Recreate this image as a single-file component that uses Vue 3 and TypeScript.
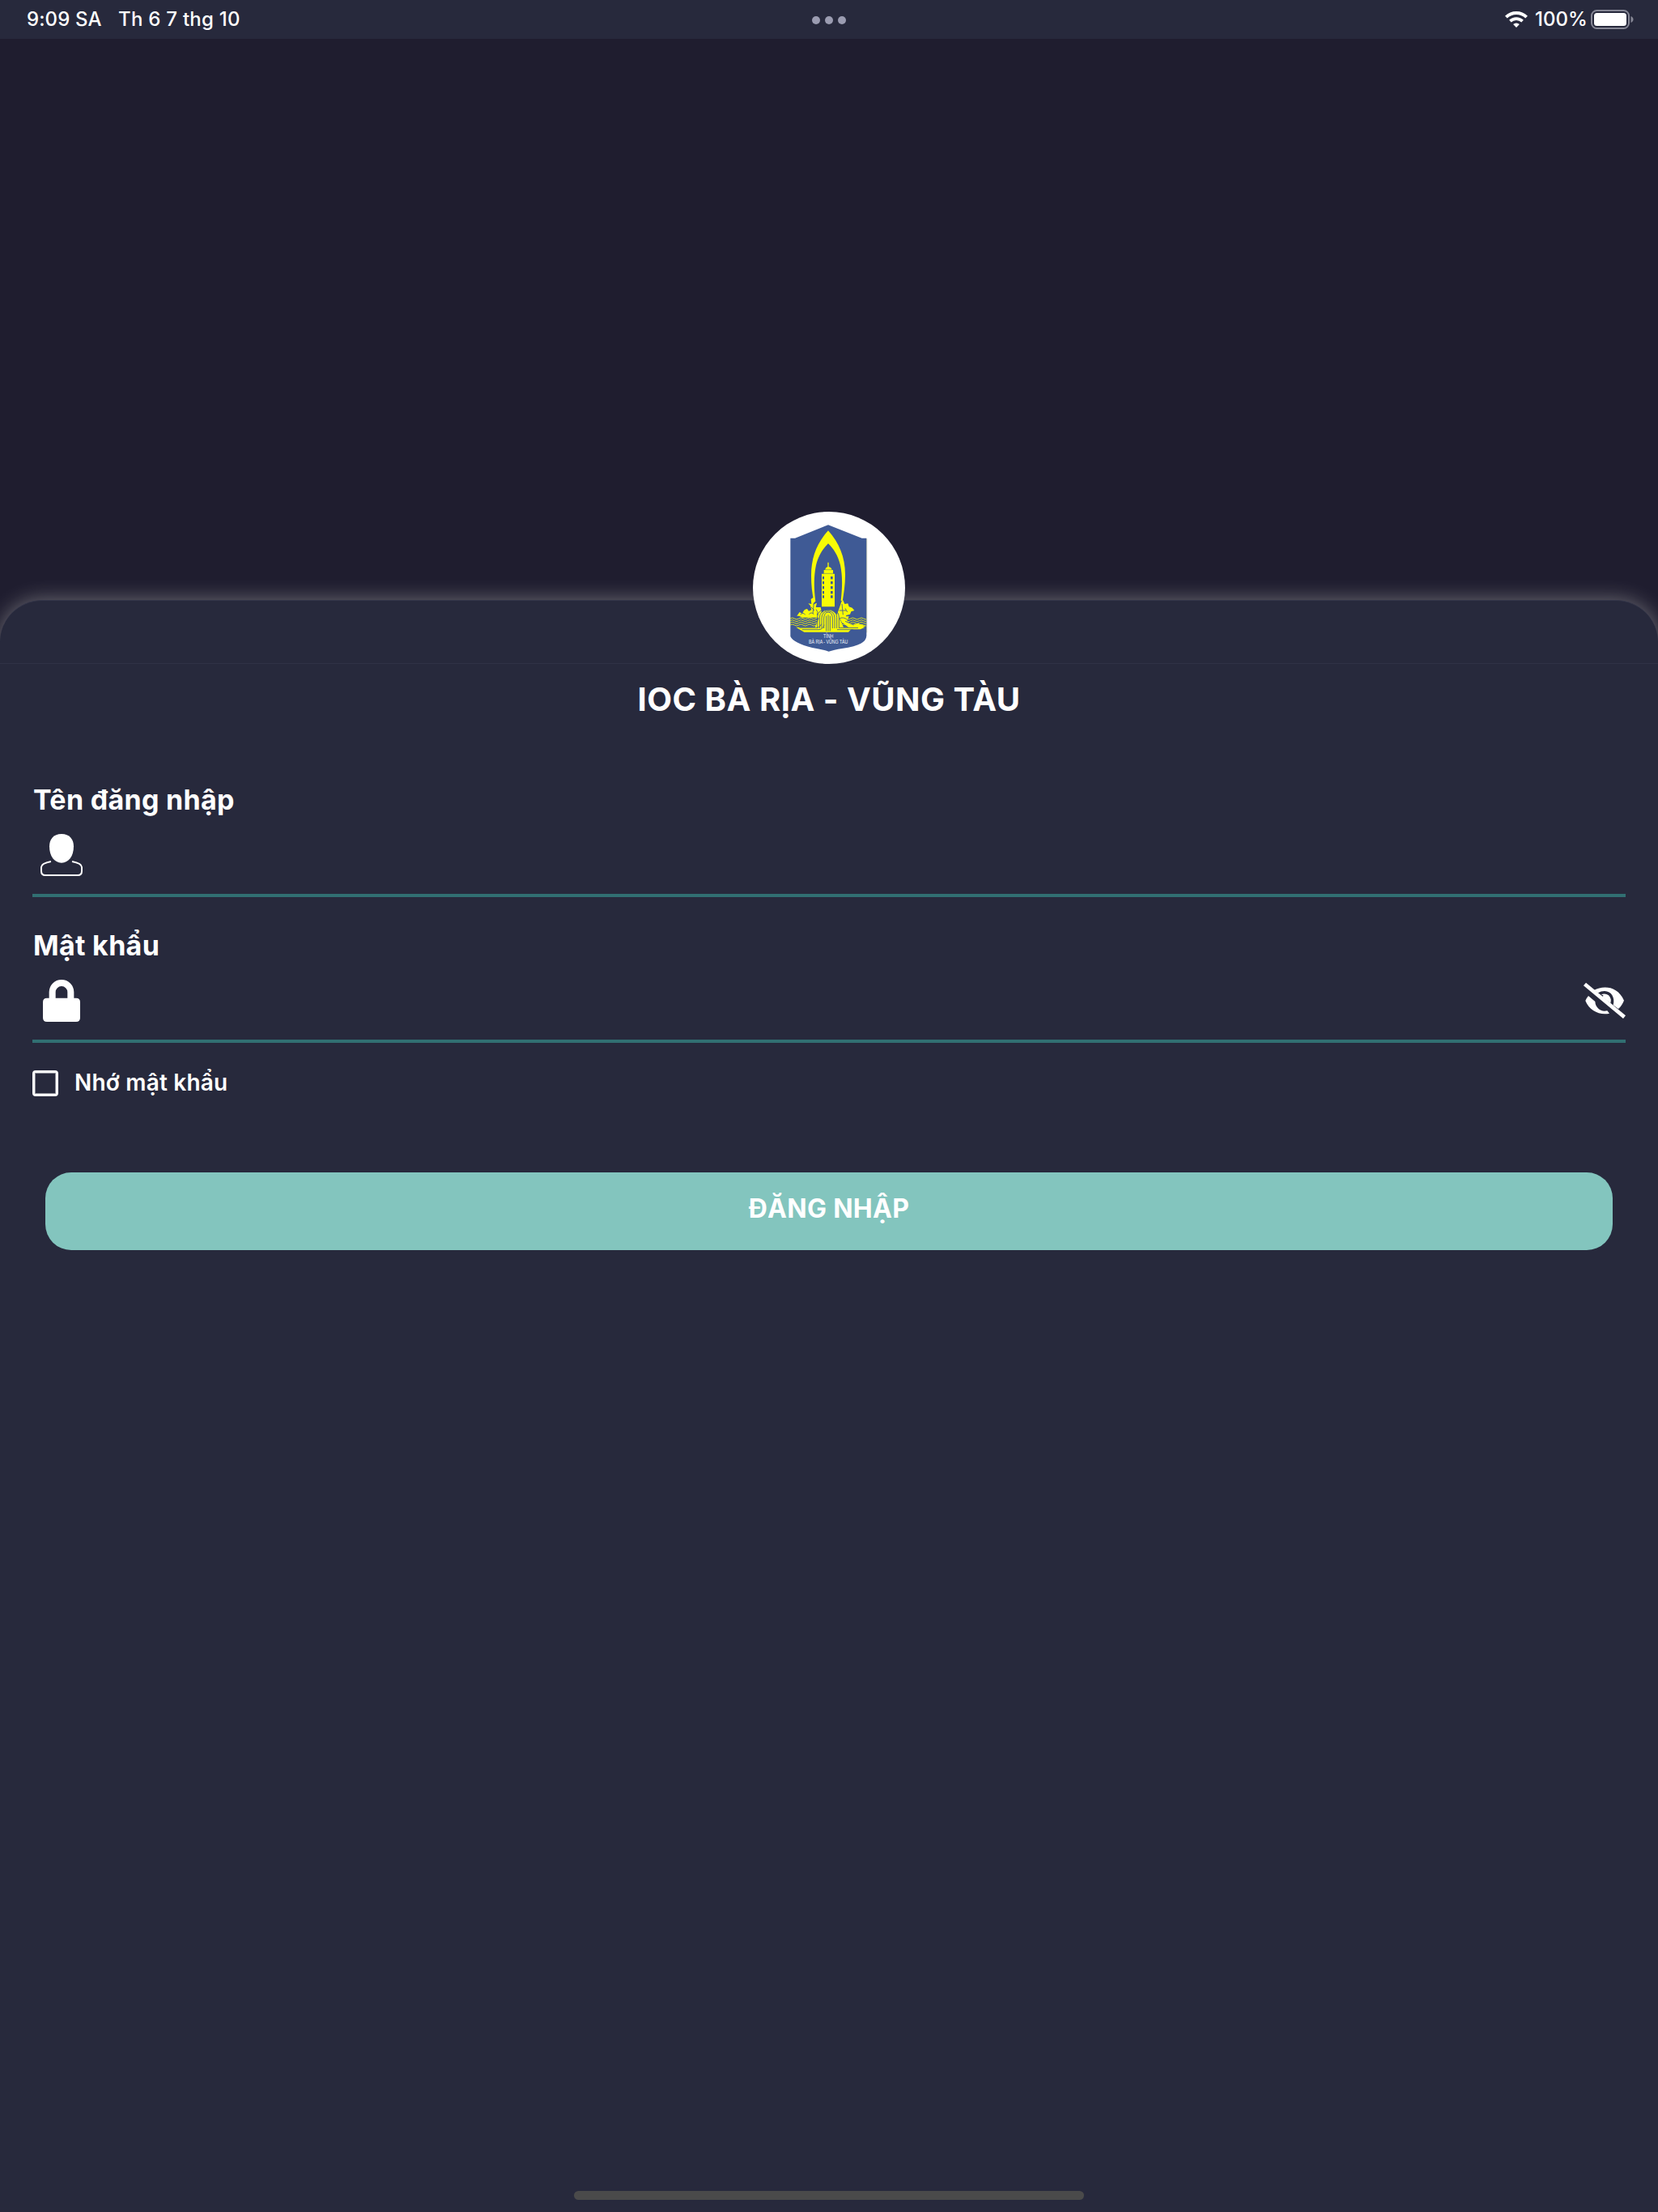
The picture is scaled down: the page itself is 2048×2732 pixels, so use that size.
<script setup lang="ts">
import { ref } from 'vue'

const remember = ref(false)
const windowRows = [274, 292, 310, 328, 344]
const waves = [430, 438, 446, 454]
const rings = [16, 24, 32, 40]
const wavePath = (y: number): string => {
  let d = `M168 ${y}`
  for (let i = 0; i < 9; i++) d += 'q8 -6 16 0t16 0'
  return d
}
</script>

<template>
  <div class="screen">
    <header class="status">
      <div class="side">
        <span class="time">9:09 SA</span>
        <span class="date">Th 6 7 thg 10</span>
      </div>
      <div class="dots"><i></i><i></i><i></i></div>
      <div class="side right">
        <svg class="wifi" viewBox="0 0 28 20">
          <path d="M14 20l-3.9-3.9a5.6 5.6 0 0 1 7.8 0z" fill="#fff" />
          <path d="M6.4 12.2a10.9 10.9 0 0 1 15.2 0" fill="none" stroke="#fff" stroke-width="3.7" />
          <path d="M1.4 7.2a18 18 0 0 1 25.2 0" fill="none" stroke="#fff" stroke-width="3.9" />
        </svg>
        <span class="percent">100%</span>
        <svg class="battery" viewBox="0 0 54 24">
          <rect x="1" y="1" width="46" height="22" rx="6.5" fill="none" stroke="#868795" stroke-width="2" />
          <rect x="4" y="4" width="40" height="16" rx="3.5" fill="#fff" />
          <path d="M49.5 8c4 1.6 4 6.4 0 8z" fill="#868795" />
        </svg>
      </div>
    </header>

    <main class="panel">
      <svg class="logo" viewBox="30 34 564 564">
        <defs>
          <clipPath id="shield">
            <path d="M168 83H451V494Q450 512 430 522L311 552L190 522Q169 512 168 494Z" />
          </clipPath>
        </defs>
        <circle cx="312" cy="316" r="282" fill="#fff" />
        <path d="M309 83L434 132H451V494Q450 512 430 522Q410 533 360 541Q330 546 311 552Q290 545 250 538Q180 520 169 496V132H186Z" fill="#3f5a95" />
        <path d="M452 134V482" stroke="#9aa392" stroke-width="2" />
        <path fill="#f8fb05" fill-rule="evenodd" d="M309 104C350 150 373 205 372 270C372 305 367 335 362 366L356 364C362 310 362 270 354 232C345 195 329 172 309 152C289 172 273 195 264 232C256 270 255 315 262 366L257 370C249 335 246 305 246 270C246 205 267 150 309 104Z" />
        <path fill="#f8fb05" d="M307 222h4v16q10 2 12 12h4v14h6v122h-48V264h8v-14h4q2-10 10-12z" />
        <path d="M296 249h28M293 263h34" stroke="#3f5a95" stroke-width="1.5" />
        <g v-for="y in windowRows" :key="y" fill="#3f5a95">
          <rect x="288" :y="y" width="6" height="10" />
          <rect x="318" :y="y" width="8" height="10" />
        </g>
        <g clip-path="url(#shield)">
          <path v-for="y in waves" :key="'w' + y" :d="wavePath(y)" class="wave" />
        </g>
        <path fill="#f8fb05" d="M190 462h70l18-40q34-50 68 0l20 40h80l-18 8h-34l-10 10H220l-18-10z" />
        <path fill="#f8fb05" d="M193 420l10-14 10 6q6-18 18-18l6 8 10-4-4-16-8-8 12 2-2-18 12-8 2 16-6 12 14-6-4 16 18 0 4 20 12-10v28h-84l-12-6zM340 420l12-34 6-18 6-6 6 14 12-2 4 12 12 4 8 10-12 4-4 10-14 4-6 12h-24zM350 422l36 0-8 18 22 12 20-4 26 10-14 8-46-2-28-22z" />
        <g fill="none" stroke="#3f5a95" stroke-width="2.5">
          <path d="M238 414q8-10 18 0M256 372l-4 40M246 388l12 12M264 396q10 8 4 22M360 376l4 40M350 400h26M372 392l8 14M206 416q10-12 18 0M350 430q14-8 30 4M372 440l32 14" />
          <path v-for="r in rings" :key="r" :d="`M${309 - r} 466V${434 - r / 4}Q${309 - r} ${416 - r / 2} 309 ${414 - r / 2}Q${309 + r} ${416 - r / 2} ${309 + r} ${434 - r / 4}V466`" />
          <path d="M302 476V420M309 476V416M316 476V420M202 464h66q12-2 16-14M212 471h64q14-2 18-18M350 464h70M342 471h60" />
        </g>
        <g fill="#f0f3f9" class="emblem-text">
          <text x="291" y="501" font-size="20" textLength="37" lengthAdjust="spacingAndGlyphs">TỈNH</text>
          <text x="237" y="524" font-size="20" textLength="145" lengthAdjust="spacingAndGlyphs">BÀ RỊA - VŨNG TÀU</text>
        </g>
      </svg>

      <section class="content">
        <h1>IOC BÀ RỊA - VŨNG TÀU</h1>
        <form @submit.prevent>
          <div class="field">
            <label>Tên đăng nhập</label>
            <div class="row">
              <svg class="icon" viewBox="90 240 156 156">
                <path d="M168 240C198 240 213 260 213 286C213 322 195 347 168 347C141 347 123 322 123 286C123 260 138 240 168 240Z" fill="#fff" />
                <path d="M129 342C108 346 93 352 93 363V378Q93 393 108 393H228Q243 393 243 378V363C243 352 228 346 207 342" fill="none" stroke="#fff" stroke-width="6" />
              </svg>
            </div>
          </div>
          <div class="field">
            <label>Mật khẩu</label>
            <div class="row">
              <svg class="icon" viewBox="90 240 156 156">
                <path fill-rule="evenodd" fill="#fff" d="M122 308V286A46 46 0 0 1 214 286V308H222Q237 308 237 323V381Q237 396 222 396H114Q99 396 99 381V323Q99 308 114 308ZM146 308H190V286A22 22 0 0 0 146 286Z" />
              </svg>
              <svg class="eye" viewBox="168 96 156 144">
                <path fill="#fff" d="M207 129C240 111 294 112 318 167C313 180 306 190 297 198L278 184C286 157 271 132 246 132Q233 132 222 139ZM233 145Q249 139 261 148Q273 160 268 177L237 153Q243 151 241 148Z" />
                <path fill="#fff" d="M186 150L211 171C212 191 227 206 246 206L256 205L264 215C226 222 190 205 175 168Q179 158 186 150Z" />
                <path d="M177 101L324 223L315 234L168 112Z" fill="#fff" />
              </svg>
            </div>
          </div>
          <label class="remember">
            <input v-model="remember" type="checkbox" />
            <span>Nhớ mật khẩu</span>
          </label>
          <button type="submit"><span>ĐĂNG NHẬP</span></button>
        </form>
      </section>
      <div class="home"></div>
    </main>
  </div>
</template>

<style>
body {
  margin: 0;
  background: #1f1d2f;
}
</style>

<style scoped>
.screen {
  width: 2048px;
  height: 2732px;
  overflow: hidden;
  display: flex;
  flex-direction: column;
  background: #1f1d2f;
  color: #fff;
  font-family: Inter, "Liberation Sans", sans-serif;
}
.status {
  height: 48px;
  flex: none;
  box-sizing: border-box;
  padding: 0 29px 0 33px;
  display: grid;
  grid-template-columns: 1fr auto 1fr;
  align-items: center;
  background: #27293c;
  font-size: 24px;
  font-weight: 500;
  line-height: 46px;
}
.side {
  display: flex;
  align-items: center;
  white-space: nowrap;
  height: 48px;
}
.time {
  width: 113px;
  letter-spacing: 0.1px;
}
.date {
  letter-spacing: 0.25px;
}
.right {
  justify-content: flex-end;
}
.dots {
  display: flex;
  gap: 6px;
  margin: 2px 4px 0 0;
}
.dots i {
  width: 10px;
  height: 10px;
  border-radius: 50%;
  background: #9b9cb1;
}
.wifi {
  width: 28px;
  height: 20px;
  margin-right: 9px;
}
.percent {
  width: 69px;
}
.battery {
  width: 54px;
  height: 24px;
}
.panel {
  flex: 1;
  margin-top: 693px;
  box-sizing: border-box;
  display: flex;
  flex-direction: column;
  align-items: center;
  border-radius: 52px 52px 0 0;
  background: #27293c;
  border-top: 1px solid #34364a;
  box-shadow: 0 0 26px rgba(255, 255, 245, 0.36);
}
.logo {
  width: 188px;
  height: 188px;
  flex: none;
  margin-top: -110px;
  position: relative;
  z-index: 1;
}
.wave {
  fill: none;
  stroke: #d9df20;
  stroke-width: 3;
}
.emblem-text {
  font-family: "Liberation Sans", sans-serif;
}
.content {
  width: 2048px;
  margin-top: -1px;
  border-top: 1px solid #303246;
  flex: 1;
}
h1 {
  margin: 20px 0 76px;
  text-align: center;
  font-size: 40px;
  font-weight: 700;
  line-height: 48px;
  letter-spacing: 0.5px;
}
form {
  padding: 0 40px;
  display: flex;
  flex-direction: column;
}
.field {
  margin-bottom: 36px;
  border-bottom: 4px solid #316f72;
}
.field label {
  display: block;
  padding-left: 1px;
  font-size: 34px;
  line-height: 48px;
  font-weight: 700;
  letter-spacing: 0.3px;
}
.row {
  display: flex;
  justify-content: space-between;
  align-items: center;
  height: 52px;
  padding: 18px 0 22px 10px;
}
.icon {
  width: 52px;
  height: 52px;
}
.eye {
  width: 52px;
  height: 48px;
}
.remember {
  display: flex;
  align-items: center;
  height: 32px;
  margin-top: -2px;
  font-size: 28px;
  font-weight: 600;
  letter-spacing: 0.2px;
}
.remember input {
  appearance: none;
  width: 32px;
  height: 32px;
  box-sizing: border-box;
  margin: 0 20px 0 0;
  border: 3px solid #fff;
  border-radius: 4px;
  box-shadow: inset 0 0 0 1px rgba(255, 255, 255, 0.45);
}
.remember span {
  line-height: 32px;
  padding-bottom: 2px;
}
button {
  height: 96px;
  margin: 94px 16px 0;
  padding: 0 0 7px;
  border: 0;
  border-radius: 32px;
  background: #83c5be;
  color: #fff;
  font: 700 32px/40px Inter, "Liberation Sans", sans-serif;
  letter-spacing: 0.3px;
}
.home {
  width: 630px;
  height: 11px;
  margin-bottom: 15px;
  border-radius: 6px;
  background: #4a4a4a;
}
</style>
